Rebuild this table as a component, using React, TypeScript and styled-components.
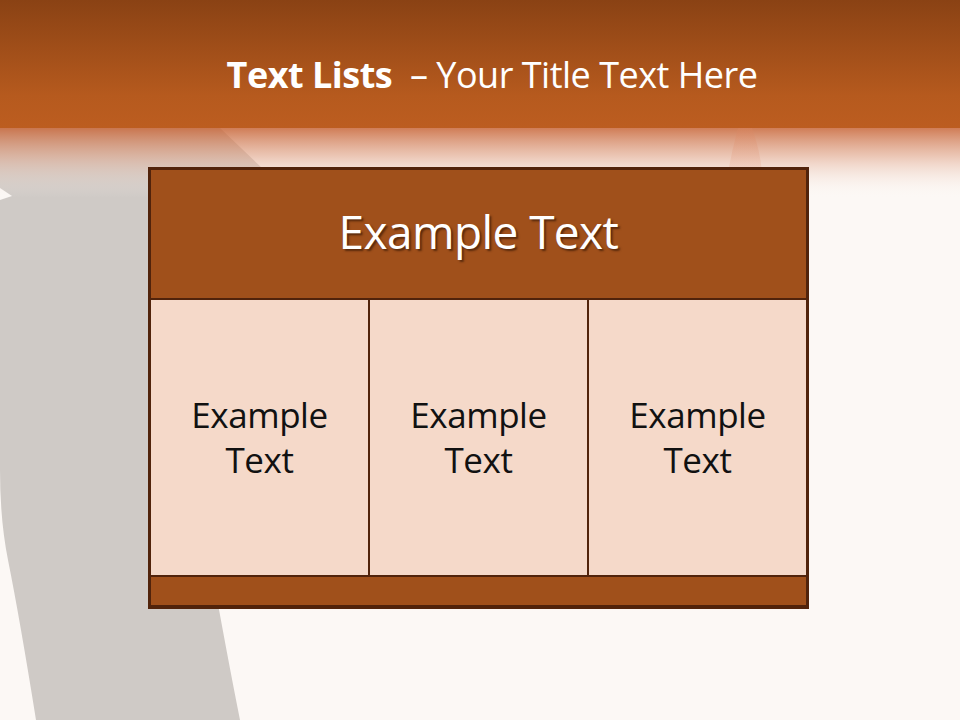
import React from 'react'
import styled, { createGlobalStyle } from 'styled-components'

const GlobalStyle = createGlobalStyle`
  html, body {
    margin: 0;
    padding: 0;
    background: #fcf8f5;
  }
`

const Slide = styled.div`
  position: relative;
  width: 960px;
  height: 720px;
  overflow: hidden;
  background: #fcf8f5;
  font-family: 'Open Sans', 'Liberation Sans', sans-serif;
  display: flex;
  flex-direction: column;
`

const Backdrop = styled.svg`
  position: absolute;
  left: 0;
  top: 0;
  width: 960px;
  height: 720px;
`

const TitleBar = styled.header`
  position: relative;
  height: 128px;
  display: flex;
  align-items: center;
  justify-content: center;
  padding-left: 24px;
  padding-top: 20px;
  box-sizing: border-box;
  color: #fff;
  font-size: 36px;
  letter-spacing: -0.5px;
  white-space: pre;
`

const Bold = styled.span`
  font-weight: 700;
`

const Table = styled.div`
  position: relative;
  margin: 39px 0 0 148px;
  width: 661px;
  height: 442px;
  box-sizing: border-box;
  border: 3px solid #51230b;
  display: grid;
  grid-template-rows: 128px 275px 28px;
  background: #51230b;
  gap: 2px;
`

const Header = styled.div`
  background: #a0501b;
  color: #fff;
  font-size: 46px;
  display: flex;
  align-items: center;
  justify-content: center;
  padding-bottom: 6px;
  letter-spacing: -0.6px;
  text-shadow: 2px 2px 2px rgba(60, 25, 5, 0.7);
`

const Cells = styled.div`
  display: grid;
  grid-template-columns: 1fr 1fr 1fr;
  gap: 2px;
`

const Cell = styled.div`
  background: #f5d9c9;
  color: #111;
  font-size: 35px;
  line-height: 45px;
  letter-spacing: -0.45px;
  text-align: center;
  display: flex;
  align-items: center;
  justify-content: center;
  padding-bottom: 2px;
`

const Band = styled.div`
  background: #a0501b;
`

export default function App() {
  return (
    <Slide>
      <GlobalStyle />
      <Backdrop viewBox="0 0 960 720">
        <defs>
          <linearGradient id="top" x1="0" y1="0" x2="0" y2="1">
            <stop offset="0" stopColor="#8a4214" />
            <stop offset="0.75" stopColor="#b65a1e" />
            <stop offset="1" stopColor="#bc5d20" />
          </linearGradient>
          <linearGradient id="fade" x1="0" y1="0" x2="0" y2="1">
            <stop offset="0" stopColor="#c8673a" stopOpacity="0.85" />
            <stop offset="0.4" stopColor="#e0a58a" stopOpacity="0.6" />
            <stop offset="1" stopColor="#fcf8f5" stopOpacity="0" />
          </linearGradient>
          <linearGradient id="streak" x1="0" y1="0" x2="0" y2="1">
            <stop offset="0" stopColor="#d98560" stopOpacity="0.35" />
            <stop offset="1" stopColor="#e9a58a" stopOpacity="0.2" />
          </linearGradient>
        </defs>
        <path
          d="M0 128 L220 128 L262 168 L210 560 Q228 660 240 720 L36 720 Q20 620 8 560 Q0 520 0 470 Z"
          fill="#cfcac6"
        />
        <path d="M0 188 L12 196 L0 200 Z" fill="#fbf7f4" />
        <rect x="0" y="128" width="960" height="70" fill="url(#fade)" />
        <path
          d="M738 128 L752 128 Q760 150 762 172 L728 172 Q732 150 738 128 Z"
          fill="url(#streak)"
        />
        <rect x="0" y="0" width="960" height="128" fill="url(#top)" />
      </Backdrop>
      <TitleBar>
        <Bold>Text Lists</Bold>
        {'  – Your Title Text Here'}
      </TitleBar>
      <Table>
        <Header>Example Text</Header>
        <Cells>
          <Cell>Example<br />Text</Cell>
          <Cell>Example<br />Text</Cell>
          <Cell>Example<br />Text</Cell>
        </Cells>
        <Band />
      </Table>
    </Slide>
  )
}
